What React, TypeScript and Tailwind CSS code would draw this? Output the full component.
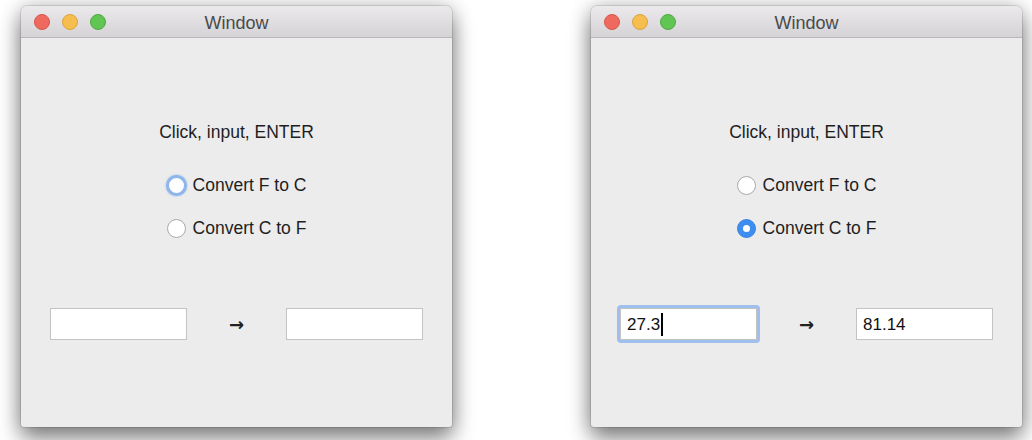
import React from "react";

const font = { fontFamily: '"Liberation Sans", Arial, sans-serif' };

function TitleBar() {
  return (
    <div className="relative flex h-[32px] items-center border-b border-[#b8b6b8] bg-gradient-to-b from-[#ebe9eb] to-[#d5d3d5] pl-[13px] rounded-t-[6px]">
      <div className="flex gap-[12px] pt-[1px]">
        <div className="h-[16px] w-[16px] rounded-full border border-[#d8554c] bg-[#ee6a5f]" />
        <div className="h-[16px] w-[16px] rounded-full border border-[#dca43a] bg-[#f5be4f]" />
        <div className="h-[16px] w-[16px] rounded-full border border-[#4fa93f] bg-[#61c554]" />
      </div>
      <div className="pointer-events-none absolute inset-0 flex items-center justify-center pt-[3px] text-[18px] text-[#4a4a4a]">
        Window
      </div>
    </div>
  );
}

function Radio({ checked, focused, label }: { checked?: boolean; focused?: boolean; label: string }) {
  return (
    <div className="flex h-[24px] items-center gap-[6px]">
      <div className="flex h-[20px] w-[20px] items-center justify-center">
        {checked ? (
          <div className="flex h-[19px] w-[19px] items-center justify-center rounded-full bg-[#3d8ef0] border border-[#3a82de]">
            <div className="h-[7px] w-[7px] rounded-full bg-white" />
          </div>
        ) : focused ? (
          <div className="h-[21px] w-[21px] shrink-0 rounded-full border-[3px] border-[#8fb6ec] bg-white shadow-[0_0_2px_rgba(80,140,230,0.6)]" />
        ) : (
          <div className="h-[19px] w-[19px] rounded-full border border-[#a9a9a9] bg-white" />
        )}
      </div>
      <span className="text-[17.5px] leading-[24px] text-[#1e1e1e]">{label}</span>
    </div>
  );
}

function Field({ value, focused }: { value?: string; focused?: boolean }) {
  return (
    <div className={focused ? "-m-[3px] rounded-[4px] bg-[#9fc0ef] p-[3px]" : ""}>
      <div className="flex h-[32px] w-[137px] items-center border border-[#c3c3c3] bg-white px-[6px] pt-[1px] text-[17px] text-[#111]">
        {value}
        {focused && <span className="ml-[1px] inline-block h-[23px] w-[1.5px] bg-black" />}
      </div>
    </div>
  );
}

function Win({ second }: { second?: boolean }) {
  return (
    <div className="flex h-[421px] w-[431px] flex-col overflow-hidden rounded-t-[6px] rounded-b-[3px] bg-[#ececec] shadow-[0_12px_22px_rgba(0,0,0,0.45),0_0_20px_rgba(0,0,0,0.22),0_0_0_1px_rgba(0,0,0,0.1)]">
      <TitleBar />
      <div className="flex flex-1 flex-col items-center pt-[83px]">
        <div className="h-[22px] text-[17.5px] leading-[22px] text-[#1e1e1e]">Click, input, ENTER</div>
        <div className="mt-[30px] flex flex-col items-start gap-[19px]">
          <Radio label="Convert F to C" focused={!second} />
          <Radio label="Convert C to F" checked={second} />
        </div>
        <div className="mt-[68px] flex w-full items-center justify-between px-[29px]">
          <Field value={second ? "27.3" : ""} focused={second} />
          <span className="font-['DejaVu_Sans',sans-serif] text-[18px] font-bold text-[#222]">→</span>
          <Field value={second ? "81.14" : ""} />
        </div>
      </div>
    </div>
  );
}

export default function App() {
  return (
    <div style={font} className="flex h-[440px] w-[1032px] gap-[139px] overflow-hidden bg-white pl-[21px] pt-[6px]">
      <Win />
      <Win second />
    </div>
  );
}
